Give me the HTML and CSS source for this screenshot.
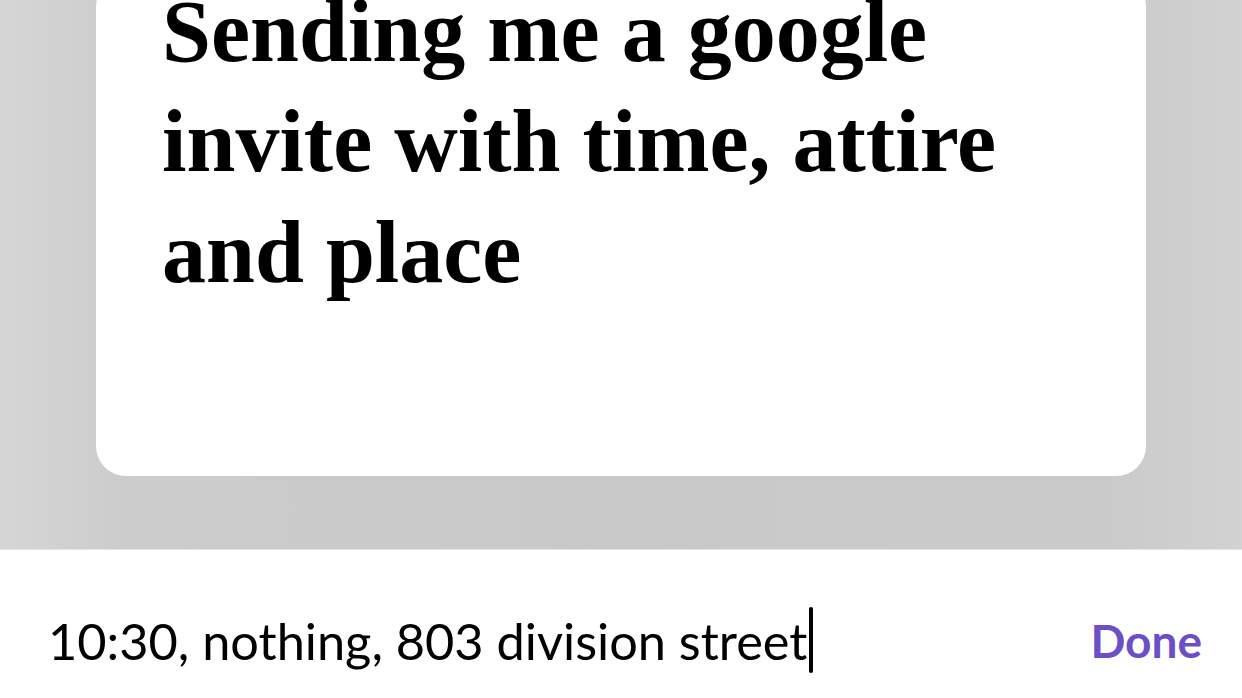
FILE: index.html
```html
<!DOCTYPE html>
<html>
<head>
<meta charset="utf-8">
<link rel="stylesheet" href="styles.css">
</head>
<body>
<div class="screen">
  <div class="backdrop">
    <div class="card">
      <h1 class="title">Sending me a google invite with time, attire and place</h1>
    </div>
  </div>
  <div class="inputbar">
    <div class="field"><span class="value">10:30, nothing, 803 division street</span><span class="caret"></span></div>
    <button class="done">Done</button>
  </div>
</div>
</body>
</html>
```

FILE: styles.css
```css
html, body {
  margin: 0;
  padding: 0;
  background: #ffffff;
}
.screen {
  width: 1242px;
  height: 698px;
  display: flex;
  flex-direction: column;
  overflow: hidden;
}
.backdrop {
  height: 549px;
  flex: none;
  background: linear-gradient(90deg, #d6d6d6 0%, #cccccc 10%, #c9c9c9 50%, #cbcbcb 90%, #d2d2d2 100%);
  display: flex;
  flex-direction: column;
  justify-content: flex-end;
  padding: 0 96px 73px 96px;
  box-sizing: border-box;
  overflow: hidden;
}
.card {
  background: #ffffff;
  border-radius: 30px;
  padding: 0 40px 168px 66px;
  flex: none;
}
.title {
  margin: 0;
  font-family: "Liberation Serif", serif;
  font-weight: 700;
  font-size: 88px;
  line-height: 110.5px;
  letter-spacing: 0;
  color: #000000;
  width: 900px;
}
.inputbar {
  flex: 1;
  display: flex;
  align-items: center;
  justify-content: space-between;
  padding: 32px 40px 0 48px;
  border-top: 1px solid #e4e4e4;
}
.field {
  display: flex;
  align-items: center;
  font-family: Lato, sans-serif;
  font-size: 50.5px;
  color: #000000;
}
.caret {
  display: inline-block;
  width: 4px;
  height: 66px;
  background: #000000;
  border-radius: 2px;
  margin-left: 2px;
}
.done {
  background: none;
  border: none;
  padding: 0;
  font-family: Lato, sans-serif;
  font-weight: 700;
  font-size: 46px;
  color: #6c4fc6;
}
```
